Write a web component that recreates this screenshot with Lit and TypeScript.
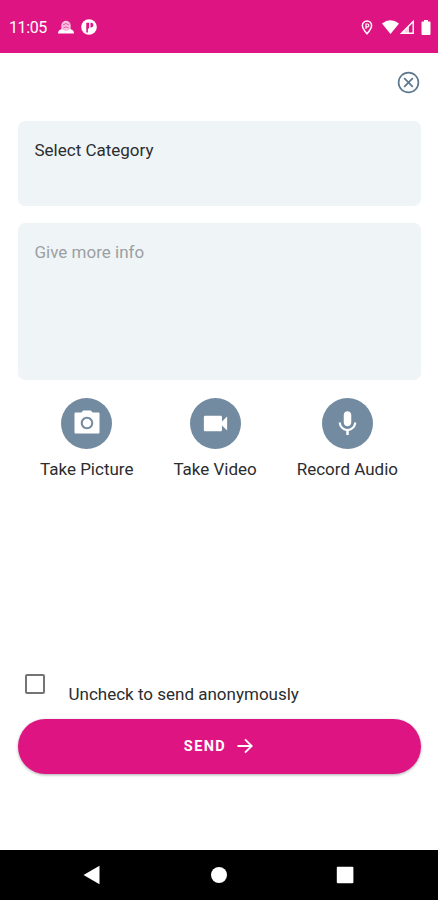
import { LitElement, html, svg, css } from "lit";
import { customElement } from "lit/decorators.js";

const camera = svg`<path fill-rule="evenodd" d="M9 2 7.500 3.500H3c-.6 0-1 .4-1 1v14.800c0 .6.4 1 1 1h18c.6 0 1-.4 1-1V4.500c0-.6-.4-1-1-1h-4.500L15 2zm3 15c-2.760 0-5-2.240-5-5s2.240-5 5-5 5 2.240 5 5-2.240 5-5 5z"/><circle cx="12" cy="12" r="3.400"/>`;
const video = svg`<path d="M17 10.500V7c0-.55-.45-1-1-1H4c-.55 0-1 .45-1 1v10c0 .55.45 1 1 1h12c.55 0 1-.45 1-1v-3.500l4 4v-11z"/>`;
const mic = svg`<path transform="translate(.4 .6)" d="M12 14c1.660 0 3-1.340 3-3V5c0-1.660-1.340-3-3-3S9 3.340 9 5v6c0 1.660 1.340 3 3 3zm5.300-3c0 3-2.540 5.100-5.300 5.100S6.700 14 6.700 11H5c0 3.410 2.720 6.230 6 6.720V21h2v-3.280c3.280-.48 6-3.300 6-6.720z"/>`;

@customElement("app-root")
export class AppRoot extends LitElement {
  static styles = css`
    :host {
      display: flex;
      flex-direction: column;
      height: 900px;
      background: #fff;
      color: #2b2d2e;
      font: 17px/20px Roboto, sans-serif;
      overflow: hidden;
    }
    * { box-sizing: border-box; }
    svg { display: block; flex: none; }
    .status {
      height: 52.500px;
      flex: none;
      background: #de1482;
      color: #fff;
      fill: #fff;
      display: flex;
      align-items: center;
      padding: 2px 7px 0 9px;
    }
    .time { font-size: 16px; width: 38px; white-space: nowrap; letter-spacing: -0.400px; margin-top: 1px; }
    .hat { margin-left: 11px; }
    .app { margin-left: 7px; }
    .pin { margin-left: auto; }
    .wifi { margin-left: 9px; }
    .signal { margin-left: 1px; }
    .battery { margin-left: 7px; }
    main {
      flex: 1;
      min-height: 0;
      display: flex;
      flex-direction: column;
      padding: 0 17px 0 17.500px;
    }
    .close { align-self: flex-end; margin: 18.500px 1px 0 0; }
    .card {
      background: #eff4f7;
      border-radius: 7px;
      padding: 19px 17px;
      flex: none;
      white-space: nowrap;
    }
    .category { height: 84.500px; margin-top: 27px; }
    .info { height: 157px; margin-top: 17.500px; color: #9c9fa1; }
    .actions { display: flex; justify-content: space-between; padding: 0 23px 0 22.500px; margin-top: 17.500px; }
    .action { display: flex; flex-direction: column; align-items: center; gap: 10px; white-space: nowrap; }
    .disc {
      width: 51px;
      height: 51px;
      border-radius: 50%;
      background: #738ba0;
      fill: #fff;
      display: grid;
      place-items: center;
    }
    .consent { display: flex; gap: 24px; margin: auto 0 14.500px 7.500px; }
    .box { width: 19.500px; height: 20px; border: 2px solid #747474; border-radius: 2px; }
    .consent span { margin-top: 10px; white-space: nowrap; }
    .send {
      flex: none;
      height: 55px;
      margin-bottom: 76px;
      border: 0;
      border-radius: 28px;
      background: #de1482;
      color: #fff;
      box-shadow: 0 1px 3px #0005;
      font: 700 14.500px/20px Roboto, sans-serif;
      letter-spacing: 1.400px;
      display: flex;
      align-items: center;
      justify-content: center;
      gap: 10.500px;
      padding: 0 2px 0 0;
    }
    .send span { margin-top: 2px; }
    nav {
      height: 50.500px;
      flex: none;
      background: #000;
      fill: #fff;
      display: flex;
      align-items: center;
      justify-content: space-between;
      padding: 0 84px 0 83px;
    }
  `;

  private action(icon: unknown, label: string, size: number) {
    return html`<div class="action">
      <div class="disc"><svg width=${size} height=${size} viewBox="0 0 24 24">${icon}</svg></div>
      <span>${label}</span>
    </div>`;
  }

  render() {
    return html`
      <header class="status">
        <span class="time">11:05</span>
        <svg class="hat" width="16" height="15" viewBox="0 0 16 15">
          <path opacity=".72" d="M3.300 10V5.500a4.700 4.700 0 0 1 9.400 0V10z"/>
          <path d="M5 5q3-3 6 0M5.500 8q2.500-2.500 5 0" fill="none" stroke="#de1482" stroke-width=".6"/>
          <path d="M0 13.500c0-3 2-4.300 4-4.300 1 1.500 7 1.500 8 0 2 0 4 1.300 4 4.300z"/>
        </svg>
        <svg class="app" width="16" height="16" viewBox="0 0 16 16">
          <circle cx="8" cy="8" r="7.800"/>
          <path d="M5.300 3.800h2.900v5.400l-1.300.6v3.700H5.300zM9.500 3.800h.6a2.300 2.300 0 0 1 0 4.600h-.6z" fill="#de1482"/>
        </svg>
        <svg class="pin" width="12" height="15" viewBox="0 0 12 15">
          <path d="M6 .9a4.600 4.600 0 0 0-4.600 4.600C1.400 8.600 6 13.800 6 13.800s4.600-5.200 4.600-8.300A4.600 4.600 0 0 0 6 .9z" fill="none" stroke="#fff" stroke-width="1.500"/>
          <path d="M5 9V4h1.500a1.400 1.400 0 0 1 0 2.800H5" fill="none" stroke="#fff" stroke-width="1.200"/>
        </svg>
        <svg class="wifi" width="17" height="14" viewBox="0 0 17 14"><path d="M0 3.500Q8.500-3 17 3.500L8.500 14z"/></svg>
        <svg class="signal" width="14" height="14" viewBox="0 0 14 14">
          <path d="M13.200 1.500v11.700H1.500z" fill="none" stroke="#fff" stroke-width="1.400"/>
          <path d="M9 5.500v7.700H1.500z" opacity=".8"/>
        </svg>
        <svg class="battery" width="10" height="15" viewBox="0 0 10 15"><path d="M3 0h4v1.600h1.500q1 0 1 1V14q0 1-1 1h-7q-1 0-1-1V2.600q0-1 1-1H3z"/></svg>
      </header>
      <main>
        <svg class="close" width="23" height="23" viewBox="0 0 23 23" fill="none" stroke="#5d788f" stroke-width="1.700">
          <circle cx="11.500" cy="11.500" r="9.900"/>
          <path d="m7.200 7.200 8.600 8.600m0-8.600-8.600 8.600"/>
        </svg>
        <section class="card category">Select Category</section>
        <section class="card info">Give more info</section>
        <div class="actions">
          ${this.action(camera, "Take Picture", 30)}
          ${this.action(video, "Take Video", 31)}
          ${this.action(mic, "Record Audio", 30)}
        </div>
        <label class="consent"><div class="box"></div><span>Uncheck to send anonymously</span></label>
        <button class="send"><span>SEND</span>
          <svg width="16" height="16" viewBox="0 0 16 16" fill="none" stroke="#fff" stroke-width="1.900"><path d="M.5 8h13.800M8 1.300 14.700 8 8 14.700"/></svg>
        </button>
      </main>
      <nav>
        <svg width="18" height="20" viewBox="0 0 18 20"><path d="M.5 10 16.500.8v18.400z"/></svg>
        <svg width="18" height="18" viewBox="0 0 18 18"><circle cx="9" cy="9" r="8"/></svg>
        <svg width="18" height="18" viewBox="0 0 18 18"><rect x=".8" y=".8" width="16.600" height="16.400" rx="1"/></svg>
      </nav>
    `;
  }
}
